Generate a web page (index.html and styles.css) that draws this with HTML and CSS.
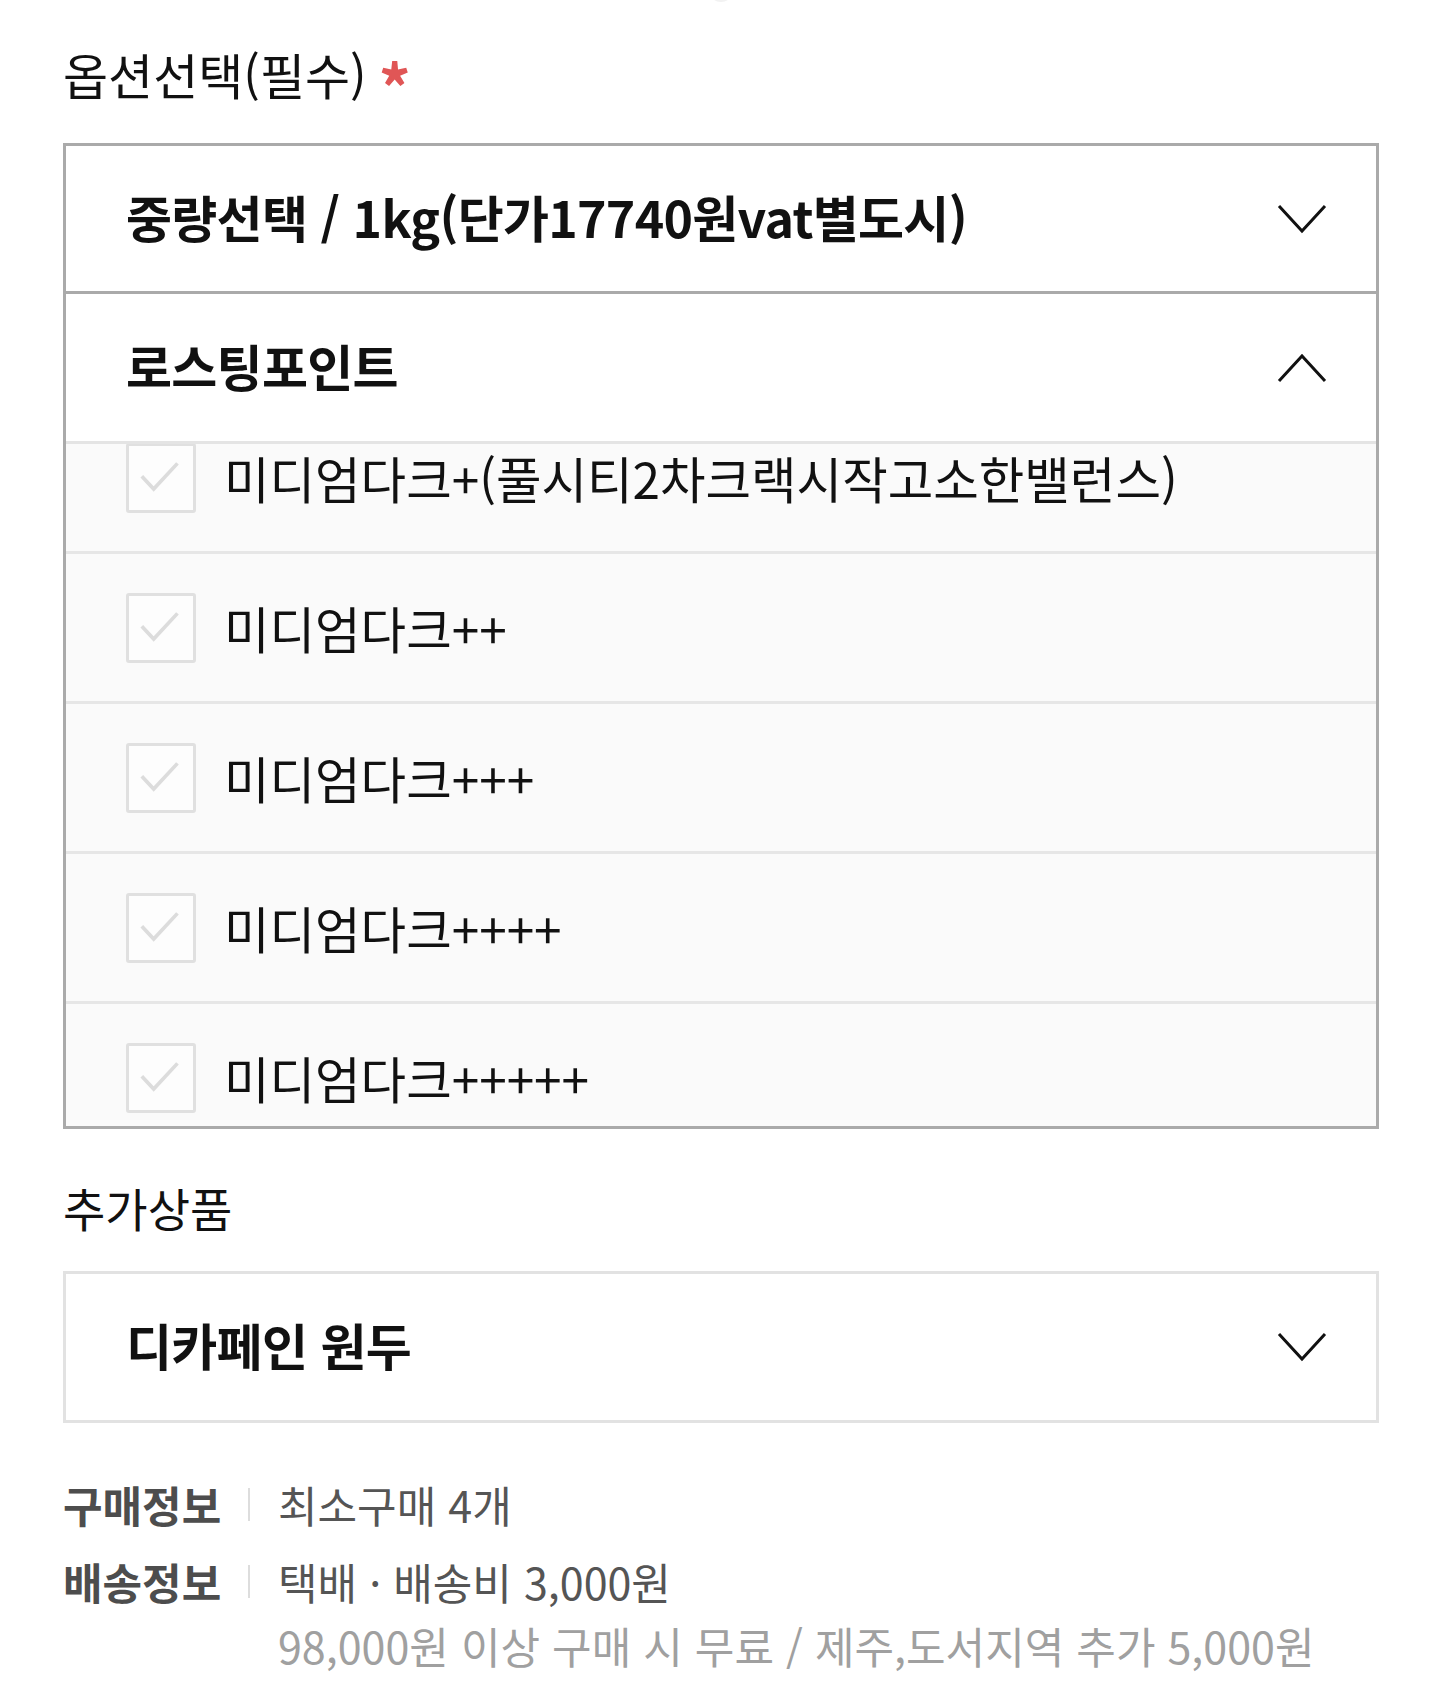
FILE: index.html
```html
<!DOCTYPE html>
<html lang="ko">
<head>
<meta charset="utf-8">
<title>옵션선택</title>
<link rel="stylesheet" href="styles.css">
</head>
<body>
<div class="page">
  <div class="top-dot"></div>
  <h2 class="field-label">옵션선택(필수)<span class="req">*</span></h2>

  <div class="select-box">
    <div class="sel-row sel-row-first">
      <span class="sel-text">중량선택 / 1kg(단가17740원vat별도시)</span>
      <svg class="chev" viewBox="0 0 50 30" width="50" height="30"><polyline points="2,2 25,27 48,2" fill="none" stroke="#111" stroke-width="3"/></svg>
    </div>
    <div class="sel-row sel-row-open">
      <span class="sel-text">로스팅포인트</span>
      <svg class="chev" viewBox="0 0 50 30" width="50" height="30"><polyline points="2,28 25,3 48,28" fill="none" stroke="#111" stroke-width="3"/></svg>
    </div>
    <div class="opt-viewport">
      <ul class="opt-list">
        <li class="opt"><span class="cb"><svg viewBox="0 0 70 70" width="64" height="64"><polyline points="14,33 27,47 53,19" fill="none" stroke="#dcdcdc" stroke-width="4"/></svg></span><span class="opt-text">미디엄다크+(풀시티2차크랙시작고소한밸런스)</span></li>
        <li class="opt"><span class="cb"><svg viewBox="0 0 70 70" width="64" height="64"><polyline points="14,33 27,47 53,19" fill="none" stroke="#dcdcdc" stroke-width="4"/></svg></span><span class="opt-text">미디엄다크++</span></li>
        <li class="opt"><span class="cb"><svg viewBox="0 0 70 70" width="64" height="64"><polyline points="14,33 27,47 53,19" fill="none" stroke="#dcdcdc" stroke-width="4"/></svg></span><span class="opt-text">미디엄다크+++</span></li>
        <li class="opt"><span class="cb"><svg viewBox="0 0 70 70" width="64" height="64"><polyline points="14,33 27,47 53,19" fill="none" stroke="#dcdcdc" stroke-width="4"/></svg></span><span class="opt-text">미디엄다크++++</span></li>
        <li class="opt"><span class="cb"><svg viewBox="0 0 70 70" width="64" height="64"><polyline points="14,33 27,47 53,19" fill="none" stroke="#dcdcdc" stroke-width="4"/></svg></span><span class="opt-text">미디엄다크+++++</span></li>
      </ul>
    </div>
  </div>

  <h2 class="field-label field-label-2">추가상품</h2>

  <div class="select-box select-box-light">
    <div class="sel-row sel-row-single">
      <span class="sel-text">디카페인 원두</span>
      <svg class="chev" viewBox="0 0 50 30" width="50" height="30"><polyline points="2,2 25,27 48,2" fill="none" stroke="#111" stroke-width="3"/></svg>
    </div>
  </div>

  <div class="info">
    <div class="info-row">
      <span class="info-label">구매정보</span>
      <span class="info-sep"></span>
      <div class="info-value">
        <div>최소구매 4개</div>
      </div>
    </div>
    <div class="info-row">
      <span class="info-label">배송정보</span>
      <span class="info-sep"></span>
      <div class="info-value">
        <div>택배 · 배송비 3,000원</div>
        <div class="info-sub">98,000원 이상 구매 시 무료 / 제주,도서지역 추가 5,000원</div>
      </div>
    </div>
  </div>
</div>
</body>
</html>
```

FILE: styles.css
```css
* { box-sizing: border-box; }

html, body {
  margin: 0;
  padding: 0;
  background: #ffffff;
}

body {
  font-family: "Noto Sans CJK KR", "Noto Sans", sans-serif;
  color: #111111;
}

.page {
  position: relative;
  width: 1440px;
  height: 1699px;
  padding: 44px 61px 0 63px;
  overflow: hidden;
}

.top-dot {
  position: absolute;
  left: 710px;
  top: -16px;
  width: 22px;
  height: 18px;
  border-radius: 50%;
  background: #f2f2f2;
}

.field-label {
  margin: 0 0 39px 0;
  height: 60px;
  font-size: 49px;
  line-height: 60px;
  font-weight: 400;
  letter-spacing: 0;
  color: #111111;
  white-space: nowrap;
}

.req {
  display: inline;
  margin-left: 12px;
  color: #e05656;
  font-size: 64px;
  font-weight: 700;
  line-height: 0;
  vertical-align: -18px;
}

.field-label-2 {
  margin-top: 48px;
  margin-bottom: 34px;
  font-size: 46px;
}

.select-box {
  width: 1316px;
  border: 3px solid #aaaaaa;
  background: #ffffff;
}

.select-box-light {
  border-color: #e2e2e2;
}

.sel-row {
  display: flex;
  align-items: center;
  justify-content: space-between;
  padding: 0 49px 0 60px;
}

.sel-row-first {
  height: 148px;
  border-bottom: 3px solid #aaaaaa;
}

.sel-row-open {
  height: 150px;
  border-bottom: 3px solid #e4e4e4;
}

.sel-row-single {
  height: 146px;
}

.sel-text {
  margin-bottom: 6px;
  font-size: 50px;
  font-weight: 700;
  letter-spacing: -0.7px;
  color: #111111;
  line-height: 60px;
  white-space: nowrap;
}

.chev {
  display: block;
  flex: none;
}

.opt-viewport {
  height: 682px;
  overflow: hidden;
  background: #fafafa;
}

.opt-list {
  list-style: none;
  margin: -43px 0 0 0;
  padding: 0;
}

.opt {
  display: flex;
  align-items: center;
  height: 150px;
  border-top: 3px solid #e6e6e6;
  padding-left: 60px;
  background: #fafafa;
}

.cb {
  display: flex;
  align-items: center;
  justify-content: center;
  flex: none;
  width: 70px;
  height: 70px;
  border: 3px solid #e0e0e0;
  border-radius: 3px;
  background: #fdfdfd;
}

.cb svg {
  display: block;
}

.opt-text {
  margin-left: 28px;
  font-size: 49.5px;
  letter-spacing: 0;
  line-height: 50px;
  color: #111111;
  white-space: nowrap;
}

.info {
  margin-top: 49px;
  display: flex;
  flex-direction: column;
  gap: 13px;
}

.info-row {
  display: flex;
  align-items: flex-start;
}

.info-label {
  flex: none;
  width: 185px;
  font-size: 43px;
  line-height: 64px;
  font-weight: 700;
  letter-spacing: 0;
  color: #4d4d4d;
}

.info-sep {
  flex: none;
  width: 2px;
  height: 33px;
  margin-top: 16px;
  margin-right: 28px;
  background: #dddddd;
}

.info-value {
  font-size: 43px;
  line-height: 64px;
  letter-spacing: 0;
  color: #555555;
  white-space: nowrap;
}

.info-sub {
  color: #a0a0a0;
}
```
